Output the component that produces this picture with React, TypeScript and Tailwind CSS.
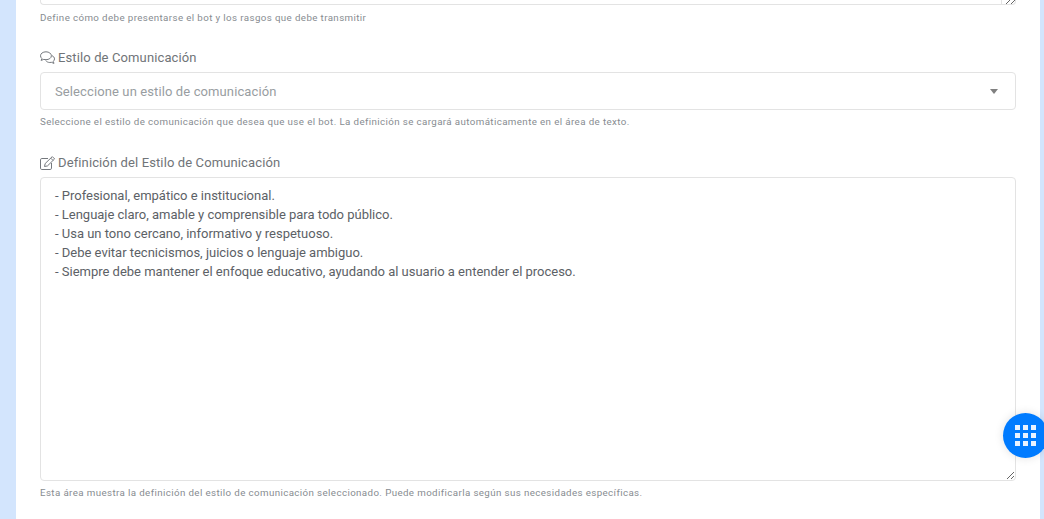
import React from "react";

function ChatIcon() {
  return (
    <svg width="15" height="14" viewBox="0 0 15 14" fill="none" stroke="#74787d" strokeWidth="1" className="shrink-0">
      <path d="M6 .8C2.9.8.5 2.5.5 4.8c0 1.100.6 2 1.400 2.700L1.100 9.400l2.700-1c.7.2 1.400.3 2.200.3 3 0 5.400-1.700 5.400-3.900S9 .8 6 .8z" />
      <path d="M12 4.700c1.500.6 2.500 1.800 2.500 3.200 0 1-.5 1.800-1.300 2.400l.8 2.100-2.700-1.100c-.5.1-1 .2-1.500.2-1.800 0-3.300-.8-4-2" />
    </svg>
  );
}

function EditIcon() {
  return (
    <svg width="15" height="14" viewBox="0 0 15 14" fill="none" stroke="#74787d" strokeWidth="1" className="shrink-0">
      <path d="M8 2.500H1.800C1 2.500.5 3 .5 3.800v8.400c0 .8.500 1.300 1.300 1.300h8.400c.8 0 1.300-.5 1.300-1.300V7" />
      <path d="M4.500 10.500l.7-3L12.300.6l2.300 2.300-7.100 7-3 .6z" />
      <path d="M10.800 2.200l2.200 2.200" />
    </svg>
  );
}

const text = `- Profesional, empático e institucional.
- Lenguaje claro, amable y comprensible para todo público.
- Usa un tono cercano, informativo y respetuoso.
- Debe evitar tecnicismos, juicios o lenguaje ambiguo.
- Siempre debe mantener el enfoque educativo, ayudando al usuario a entender el proceso.`;

export default function App() {
  return (
    <div className="relative h-[519px] w-[1044px] overflow-hidden bg-[#d3e5fd] font-['Roboto',sans-serif]">
      <div className="ml-4 mr-1 h-full bg-white px-6">
        <div className="flex h-[5px]">
          <div className="flex-1 rounded-bl border-b border-l border-[#e3e3e3]" />
          <div className="relative w-[15px] rounded-br border-x border-b border-[#e3e3e3]">
            <svg width="10" height="5" viewBox="0 0 10 5" stroke="#666" strokeWidth="1" className="absolute left-[3px] top-0">
              <path d="M1 4l4-4M6 4l4-4" />
            </svg>
          </div>
        </div>
        <p className="mt-[6px] text-[9.75px] leading-[13px] tracking-[0.385px] text-[#878c91]">
          Define cómo debe presentarse el bot y los rasgos que debe transmitir
        </p>
        <label className="mt-[23px] flex h-[21px] items-center gap-[3px] text-[13px] tracking-[0.12px] text-[#707478]">
          <ChatIcon />
          <span>Estilo de Comunicación</span>
        </label>
        <div className="mt-1 flex h-[38px] items-center justify-between rounded border border-[#e3e3e3] pl-[14px] pr-[17px] pt-[2px] text-[13px] tracking-[0.11px] text-[#989da1]">
          <span>Seleccione un estilo de comunicación</span>
          <span className="-mt-[2px] h-0 w-0 border-x-[4px] border-t-[5px] border-x-transparent border-t-[#808080]" />
        </div>
        <p className="mt-[5px] text-[9.75px] leading-[13px] tracking-[0.385px] text-[#878c91]">
          Seleccione el estilo de comunicación que desea que use el bot. La definición se cargará automáticamente en el área de texto.
        </p>
        <label className="mt-[24px] flex h-[21px] items-center gap-[3px] text-[13px] tracking-[0.12px] text-[#707478]">
          <EditIcon />
          <span>Definición del Estilo de Comunicación</span>
        </label>
        <textarea
          readOnly
          defaultValue={text}
          className="mt-1 block h-[304px] w-full rounded border border-[#e3e3e3] px-[14px] py-2 text-[13px] leading-[19px] tracking-[-0.01px] text-[#5c6166] outline-none"
        />
        <p className="mt-[5px] text-[9.75px] leading-[13px] tracking-[0.385px] text-[#878c91]">
          Esta área muestra la definición del estilo de comunicación seleccionado. Puede modificarla según sus necesidades específicas.
        </p>
      </div>
      <button className="absolute left-[1003px] top-[413px] grid h-[45px] w-[45px] grid-cols-[5px_5px_5px] content-center justify-center gap-[3px] rounded-full bg-[#007bff] shadow-[0_0_10px_rgba(0,0,0,0.12)]">
        {Array.from({ length: 9 }).map((_, i) => (
          <span key={i} className="h-[5px] w-[5px] bg-[#e8f2ff]" />
        ))}
      </button>
    </div>
  );
}
